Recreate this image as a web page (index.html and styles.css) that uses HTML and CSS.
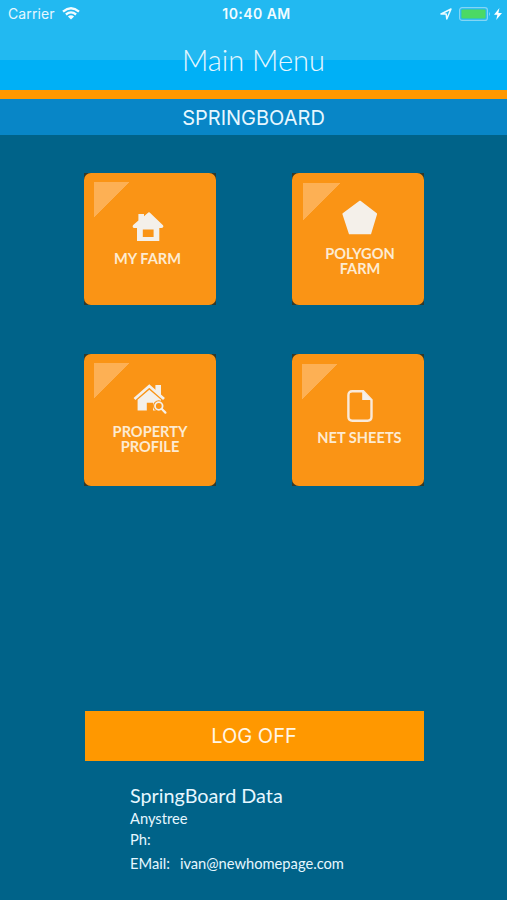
FILE: index.html
```html
<!DOCTYPE html>
<html lang="en">
<head>
    <meta charset="UTF-8">
    <title>Main Menu</title>
    <link rel="stylesheet" href="styles.css">
</head>

<body>
    <header class="header">
        <div class="status">
            <div class="status-left">
                <span class="carrier">Carrier</span>
                <svg class="wifi" width="18" height="13" viewBox="0 0 18 13">
                    <path d="M1 4.6 Q9 -2.2 17 4.6" />
                    <path d="M3.9 7.5 Q9 3.2 14.1 7.5" />
                    <path class="dot" d="M9 12.6 L5.9 9.5 Q9 7 12.1 9.5 Z" />
                </svg>
            </div>
            <span class="time">10:40 AM</span>
            <div class="status-right">
                <svg width="12" height="12" viewBox="0 0 12 12">
                    <path d="M1 6 L11 1 L6.8 11 L6.2 6.1 Z" fill="none" stroke="#e8fbff" stroke-width="1.5" stroke-linejoin="round" />
                </svg>
                <svg width="32" height="14" viewBox="0 0 32 14">
                    <rect x=".6" y=".6" width="27.8" height="12.8" rx="2.5" fill="none" stroke="#83d6f5" stroke-width="1.2" />
                    <rect x="2.4" y="2.4" width="24.2" height="9.2" rx="1" fill="#4bd964" />
                    <path d="M30 5 Q32 7 30 9 Z" fill="#83d6f5" />
                </svg>
                <svg class="bolt" width="8" height="12" viewBox="0 0 8 12">
                    <path d="M5.4 0 L0 6.8 H3.4 L2.2 12 L8 5 H4.4 Z" fill="#fff" />
                </svg>
            </div>
        </div>
        <h1>Main Menu</h1>
    </header>
    <h2 class="subtitle">SPRINGBOARD</h2>

    <ul class="menu">
        <li>
            <a class="tile farm" href="#">
                <svg width="32" height="30" viewBox="0 0 32 30">
                    <path fill-rule="evenodd" d="M16.3 0.6 Q17 0 17.7 0.6 L31 13.3 Q32.2 15.6 29.5 16 H27.3 V29 H5 V16 H2 Q-.2 15.2 1.2 13 L6.4 8.6 V2 H12 V4.2 Z M10.8 17.5 V25 H21.6 V17.5 Z" />
                </svg>
                <span>MY FARM</span>
            </a>
        </li>
        <li>
            <a class="tile polygon" href="#">
                <svg width="36" height="35" viewBox="0 0 36 35">
                    <path d="M18 1.5 L34.3 14 L28.4 33.5 H7.6 L1.2 14 Z" stroke="#f4f0ea" stroke-width="1.6" stroke-linejoin="round" />
                </svg>
                <span>POLYGON<br>FARM</span>
            </a>
        </li>
        <li>
            <a class="tile profile" href="#">
                <svg width="34" height="30" viewBox="0 0 34 30">
                    <path d="M1.5 15 L16.3 2 L31 15" fill="none" stroke="#f4f0ea" stroke-width="2.8" />
                    <path d="M22.4 1 H28 V12 L22.4 7 Z" />
                    <path d="M4.6 15.8 L16.3 5.7 L28 15.8 V26.6 H20 V18.8 H13.8 V26.6 H4.6 Z" />
                    <circle cx="25.8" cy="22" r="5.8" fill="#fa9415" />
                    <circle cx="25.8" cy="22" r="3.8" fill="#fa9415" stroke="#f4f0ea" stroke-width="1.8" />
                    <path d="M28.6 24.8 L32.4 28.6" stroke="#f4f0ea" stroke-width="2.2" stroke-linecap="round" />
                </svg>
                <span>PROPERTY<br>PROFILE</span>
            </a>
        </li>
        <li>
            <a class="tile sheets" href="#">
                <svg width="26" height="32" viewBox="0 0 26 32">
                    <path d="M5.3 1.3 H16.2 L24.5 10 V26.8 Q24.5 30.7 20.6 30.7 H5.3 Q1.4 30.7 1.4 26.8 V5.2 Q1.4 1.3 5.3 1.3 Z" fill="none" stroke="#f9eadb" stroke-width="2.4" />
                    <path d="M15.2 1 V10 H24.5 Z" />
                </svg>
                <span>NET SHEETS</span>
            </a>
        </li>
    </ul>

    <a class="logoff" href="#">LOG OFF</a>

    <div class="contact">
        <h3>SpringBoard Data</h3>
        <p class="street">Anystree</p>
        <p class="phone">Ph:</p>
        <p class="email"><span>EMail:</span><span>ivan@newhomepage.com</span></p>
    </div>
</body>

</html>
```

FILE: styles.css
```css
    * {
        box-sizing: border-box;
    }

    body,
    ul,
    h1,
    h2,
    h3,
    p {
        margin: 0;
        padding: 0;
        font-weight: normal;
    }

    ul {
        list-style: none;
    }

    a {
        text-decoration: none;
    }

    body {
        height: 900px;
        overflow: hidden;
        background: #006389;
        color: #e6f7ff;
        font-family: Lato, "Liberation Sans", sans-serif;
    }

    .header {
        height: 99px;
        background: linear-gradient(#22b9f1 60px, #00b0f6 60px);
        border-bottom: 9px solid #ff9800;
    }

    .status {
        display: grid;
        grid-template-columns: 1fr auto 1fr;
        align-items: center;
        height: 27px;
        padding: 0 5px 0 8px;
        font-family: Inter, sans-serif;
        font-size: 14px;
    }

    .status-left,
    .status-right {
        display: flex;
        align-items: center;
    }

    .status-left {
        gap: 7px;
    }

    .carrier {
        letter-spacing: 0.1px;
    }

    .status-right {
        justify-content: flex-end;
        gap: 7px;
    }

    .status-right .bolt {
        margin-left: -4px;
    }

    .wifi path {
        fill: none;
        stroke: #f2fcff;
        stroke-width: 2.3;
    }

    .wifi .dot {
        fill: #f2fcff;
        stroke: none;
    }

    .time {
        padding-left: 3px;
        font-weight: 600;
        letter-spacing: 0.45px;
        color: #f2fcff;
    }

    .header h1 {
        height: 63px;
        line-height: 66px;
        text-align: center;
        font-size: 29px;
        font-weight: 300;
    }

    .subtitle {
        height: 36px;
        line-height: 38px;
        background: #0886c7;
        text-align: center;
        font-family: Inter, sans-serif;
        font-size: 20px;
    }

    .menu {
        display: grid;
        grid-template-columns: 132px 132px;
        gap: 49px 76px;
        padding: 38px 0 0 84px;
    }

    .menu li {
        height: 132px;
        background: #2f3a2c;
    }

    .tile {
        display: flex;
        flex-direction: column;
        align-items: center;
        height: 132px;
        border-radius: 7px;
        background: #fa9415;
        color: #fdebd2;
        font-size: 14.6px;
        font-weight: bold;
        line-height: 15px;
        text-align: center;
    }

    .tile svg {
        fill: #f4f0ea;
    }

    /* folded corner */
    .tile {
        background-image: linear-gradient(135deg, #fdb054 50%, transparent 50.5%);
        background-repeat: no-repeat;
        background-size: 35px 35px;
        background-position: 10px 9px;
    }

    .farm {
        padding: 39px 5px 0 0;
    }

    .farm span {
        margin-top: 9px;
    }

    .polygon {
        padding: 27px 0 0 4px;
        background-size: 37px 37px;
        background-position: 11px 10px;
    }

    .polygon span {
        margin-top: 11px;
    }

    .profile {
        padding-top: 30px;
    }

    .profile span {
        margin-top: 10px;
    }

    .sheets {
        padding: 36px 0 0 3px;
        background-position: 10px 10px;
    }

    .sheets span {
        margin-top: 8px;
    }

    .logoff {
        display: block;
        width: 339px;
        height: 50px;
        margin: 225px 0 0 84.5px;
        background: #ff9800;
        color: #fff6e6;
        font-family: Inter, sans-serif;
        font-size: 20px;
        line-height: 51px;
        text-align: center;
    }

    .contact {
        padding: 22px 0 0 130px;
        font-size: 14.7px;
    }

    .contact h3 {
        font-size: 19.8px;
        line-height: 25px;
    }

    .contact p {
        line-height: 21px;
    }

    .contact .email {
        display: flex;
        gap: 10px;
        margin-top: 3px;
    }
```
